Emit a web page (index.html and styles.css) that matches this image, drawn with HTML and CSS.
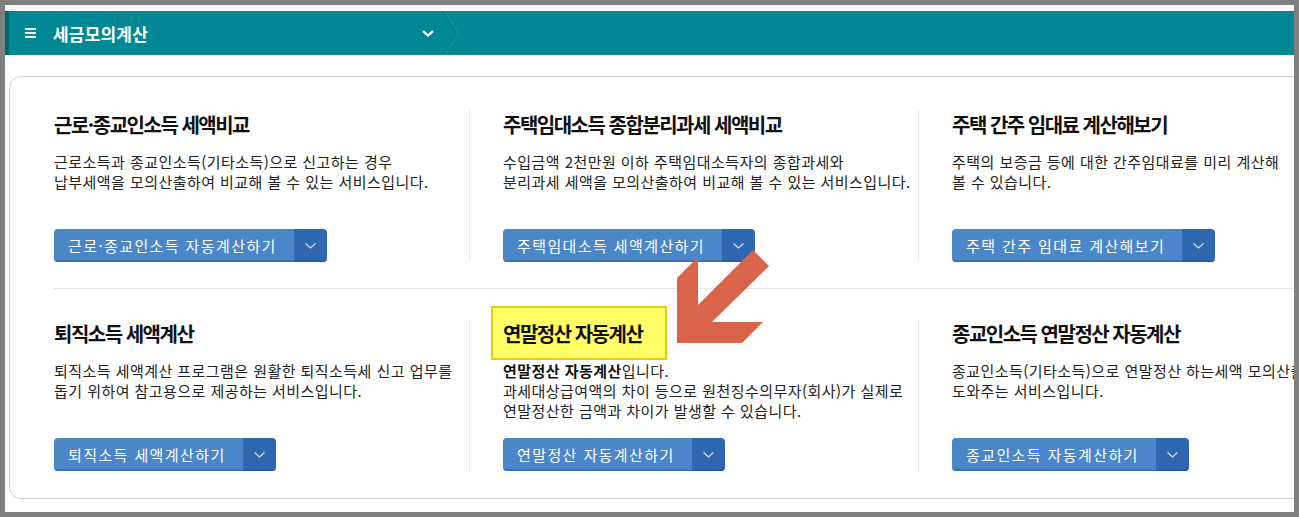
FILE: index.html
```html
<!DOCTYPE html>
<html lang="ko">
<head>
<meta charset="utf-8">
<title>세금모의계산</title>
<link rel="stylesheet" href="styles.css">
</head>
<body>
<div class="page">
  <div class="topstrip"></div>
  <nav class="nav">
    <span class="nav-edge"></span>
    <div class="nav-menu">
      <span class="ham"><i></i><i></i><i></i></span>
      <span class="nav-title">세금모의계산</span>
      <svg class="nav-chev" width="12" height="7" viewBox="0 0 12 7"><polyline points="1,1 6,5.6 11,1" fill="none" stroke="#fff" stroke-width="2.2"/></svg>
    </div>
    <svg class="nav-sep" width="18" height="44" viewBox="0 0 18 44"><polyline points="0.5,0 13.5,22 0.5,44" fill="none" stroke="#00707a" stroke-width="1"/><polyline points="1.6,0 14.6,22 1.6,44" fill="none" stroke="#2a9aa5" stroke-width="0.8"/></svg>
  </nav>

  <section class="card">
    <div class="row row1">
      <div class="cell">
        <h3 class="title">근로·종교인소득 세액비교</h3>
        <p class="desc">근로소득과 종교인소득(기타소득)으로 신고하는 경우<br>납부세액을 모의산출하여 비교해 볼 수 있는 서비스입니다.</p>
        <div class="btn"><span class="btn-main">근로·종교인소득 자동계산하기</span><span class="btn-dd"><svg width="11" height="6" viewBox="0 0 11 6"><polyline points="0.5,0.5 5.5,5 10.5,0.5" fill="none" stroke="#d6e4f5" stroke-width="1.1"/></svg></span></div>
      </div>
      <div class="cell">
        <h3 class="title">주택임대소득 종합분리과세 세액비교</h3>
        <p class="desc">수입금액 2천만원 이하 주택임대소득자의 종합과세와<br>분리과세 세액을 모의산출하여 비교해 볼 수 있는 서비스입니다.</p>
        <div class="btn"><span class="btn-main">주택임대소득 세액계산하기</span><span class="btn-dd"><svg width="11" height="6" viewBox="0 0 11 6"><polyline points="0.5,0.5 5.5,5 10.5,0.5" fill="none" stroke="#d6e4f5" stroke-width="1.1"/></svg></span></div>
      </div>
      <div class="cell">
        <h3 class="title">주택 간주 임대료 계산해보기</h3>
        <p class="desc">주택의 보증금 등에 대한 간주임대료를 미리 계산해<br>볼 수 있습니다.</p>
        <div class="btn"><span class="btn-main">주택 간주 임대료 계산해보기</span><span class="btn-dd"><svg width="11" height="6" viewBox="0 0 11 6"><polyline points="0.5,0.5 5.5,5 10.5,0.5" fill="none" stroke="#d6e4f5" stroke-width="1.1"/></svg></span></div>
      </div>
    </div>
    <div class="row row2">
      <div class="cell">
        <h3 class="title">퇴직소득 세액계산</h3>
        <p class="desc">퇴직소득 세액계산 프로그램은 원활한 퇴직소득세 신고 업무를<br>돕기 위하여 참고용으로 제공하는 서비스입니다.</p>
        <div class="btn"><span class="btn-main">퇴직소득 세액계산하기</span><span class="btn-dd"><svg width="11" height="6" viewBox="0 0 11 6"><polyline points="0.5,0.5 5.5,5 10.5,0.5" fill="none" stroke="#d6e4f5" stroke-width="1.1"/></svg></span></div>
      </div>
      <div class="cell">
        <h3 class="title hl">연말정산 자동계산</h3>
        <p class="desc"><b>연말정산 자동계산</b>입니다.<br>과세대상급여액의 차이 등으로 원천징수의무자(회사)가 실제로<br>연말정산한 금액과 차이가 발생할 수 있습니다.</p>
        <div class="btn"><span class="btn-main">연말정산 자동계산하기</span><span class="btn-dd"><svg width="11" height="6" viewBox="0 0 11 6"><polyline points="0.5,0.5 5.5,5 10.5,0.5" fill="none" stroke="#d6e4f5" stroke-width="1.1"/></svg></span></div>
      </div>
      <div class="cell">
        <h3 class="title">종교인소득 연말정산 자동계산</h3>
        <p class="desc">종교인소득(기타소득)으로 연말정산 하는세액 모의산출을<br>도와주는 서비스입니다.</p>
        <div class="btn"><span class="btn-main">종교인소득 자동계산하기</span><span class="btn-dd"><svg width="11" height="6" viewBox="0 0 11 6"><polyline points="0.5,0.5 5.5,5 10.5,0.5" fill="none" stroke="#d6e4f5" stroke-width="1.1"/></svg></span></div>
      </div>
    </div>
    <svg class="arrow" width="92" height="93" viewBox="0 0 92 93"><polygon points="76,0 92,16 35,72 86,72 65,93 0,93 0,28 21,7 21,55" fill="#d9644a"/></svg>
  </section>
</div>
</body>
</html>
```

FILE: styles.css
```css
* { box-sizing: border-box; }
html, body { margin: 0; padding: 0; }
body {
  background: #808080;
  padding: 5px;
  width: 1299px;
  height: 517px;
  overflow: hidden;
  font-family: "Noto Sans CJK KR", "Noto Sans", sans-serif;
}
.page {
  background: #fff;
  width: 1289px;
  height: 507px;
  overflow: hidden;
}
.topstrip {
  height: 6px;
  background: #fbf8fb;
}
.nav {
  display: flex;
  height: 44px;
  background: #028794;
  align-items: center;
}
.nav-edge {
  width: 4px;
  height: 100%;
  background: #006a72;
}
.nav-menu {
  display: flex;
  align-items: center;
  width: 434px;
  height: 100%;
  padding-left: 16px;
  padding-right: 9px;
}
.ham {
  display: flex;
  flex-direction: column;
  gap: 2px;
  width: 11px;
}
.ham i {
  display: block;
  height: 2px;
  background: #fff;
}
.nav-title {
  margin-left: 17px;
  color: #fff;
  font-size: 17px;
  font-weight: 700;
  letter-spacing: 0.2px;
}
.nav-chev {
  margin-left: auto;
  margin-top: 1px;
}
.nav-sep { display: block; }

.card {
  position: relative;
  margin: 21px 0 0 4px;
  width: 1420px;
  border: 1px solid #c9d2db;
  border-radius: 12px;
  padding-left: 44px;
  background: #fff;
}
.row {
  display: grid;
  grid-template-columns: 415px 449px 449px;
}
.row1 { padding: 33px 0 26px; }
.row2 {
  border-top: 1px solid #e6e6e6;
  padding: 30px 0 27px;
}
.cell {
  display: flex;
  flex-direction: column;
}
.cell + .cell {
  border-left: 1px solid #e8e8e8;
  padding-left: 33px;
}
.title {
  margin: 0 0 12px;
  font-size: 20px;
  line-height: 30px;
  font-weight: 700;
  letter-spacing: -1.5px;
  color: #111;
  white-space: nowrap;
}
.title.hl {
  position: relative;
  z-index: 0;
}
.title.hl::before {
  content: "";
  position: absolute;
  left: -12px;
  top: -13px;
  width: 172px;
  height: 50px;
  background: #ffff66;
  border: 2px solid #e6cb12;
  z-index: -1;
}
.desc {
  margin: 0;
  height: 60px;
  font-size: 15px;
  line-height: 20px;
  letter-spacing: 0.45px;
  color: #222;
  white-space: nowrap;
}
.desc b { font-weight: 700; color: #111; }
.btn {
  display: flex;
  align-self: flex-start;
  margin-top: 17px;
  height: 33px;
  border-radius: 4px;
  overflow: hidden;
}
.btn-main {
  background: #4b86c9;
  color: #fff;
  font-size: 15px;
  line-height: 33px;
  letter-spacing: 1.4px;
  padding: 0 17px 0 14px;
  box-shadow: inset 0 -2px 0 #3c73b6;
  white-space: nowrap;
}
.btn-dd {
  width: 33px;
  background: #2f68b0;
  box-shadow: inset 0 -2px 0 #285b9d;
  display: flex;
  align-items: center;
  justify-content: center;
}
.arrow {
  position: absolute;
  left: 667px;
  top: 173px;
}
```
